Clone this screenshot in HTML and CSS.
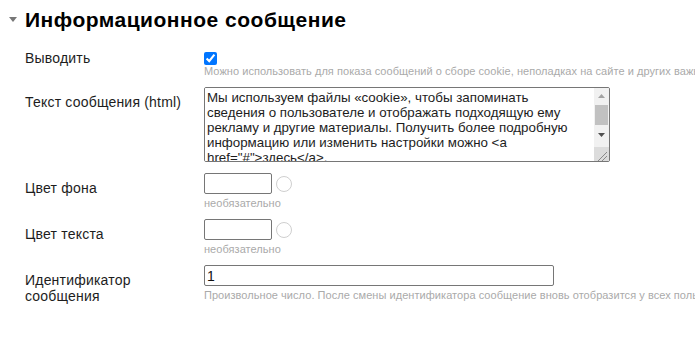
FILE: index.html
```html
<!DOCTYPE html>
<html lang="ru">
<head>
    <meta charset="UTF-8">
    <meta name="viewport" content="width=device-width, initial-scale=1.0">
    <title>Информационное сообщение</title>
    <link rel="stylesheet" href="styles.css">
</head>
<body>
    <section class="group">
        <h2 class="group-title"><span class="caret"></span>Информационное сообщение</h2>

        <div class="fields">
            <div class="field field-check">
                <label class="field-label" for="showMessage">Выводить</label>
                <div class="field-control">
                    <input type="checkbox" id="showMessage" class="check" checked>
                    <div class="hint hint-tight">Можно использовать для показа сообщений о сборе cookie, неполадках на сайте и других важных событиях</div>
                </div>
            </div>

            <div class="field field-text">
                <label class="field-label" for="messageText">Текст сообщения (html)</label>
                <div class="field-control">
                    <div class="message-box">
                        <textarea id="messageText" class="message-text">Мы используем файлы «cookie», чтобы запоминать сведения о пользователе и отображать подходящую ему рекламу и другие материалы. Получить более подробную информацию или изменить настройки можно &lt;a href="#"&gt;здесь&lt;/a&gt;.</textarea>
                        <div class="scrollbar">
                            <div class="scroll-btn">
                                <svg width="7" height="4" viewBox="0 0 7 4"><polygon points="0,4 3.5,0 7,4" fill="#a3a3a3"/></svg>
                            </div>
                            <div class="scroll-track"><div class="scroll-thumb"></div></div>
                            <div class="scroll-btn scroll-btn-down">
                                <svg width="7" height="4" viewBox="0 0 7 4"><polygon points="0,0 7,0 3.5,4" fill="#505050"/></svg>
                            </div>
                            <div class="scroll-corner">
                                <svg width="15" height="14" viewBox="0 0 15 14"><path d="M13 5 L4 14 M13 9 L8 14" stroke="#8a8a8a" stroke-width="1"/></svg>
                            </div>
                        </div>
                    </div>
                </div>
            </div>

            <div class="field">
                <label class="field-label" for="bgColor">Цвет фона</label>
                <div class="field-control">
                    <div class="color-row">
                        <input type="text" id="bgColor" class="input color-input">
                        <span class="color-swatch"></span>
                    </div>
                    <div class="hint">необязательно</div>
                </div>
            </div>

            <div class="field">
                <label class="field-label" for="textColor">Цвет текста</label>
                <div class="field-control">
                    <div class="color-row">
                        <input type="text" id="textColor" class="input color-input">
                        <span class="color-swatch"></span>
                    </div>
                    <div class="hint">необязательно</div>
                </div>
            </div>

            <div class="field">
                <label class="field-label" for="messageId">Идентификатор сообщения</label>
                <div class="field-control">
                    <input type="text" id="messageId" class="input id-input" value="1">
                    <div class="hint">Произвольное число. После смены идентификатора сообщение вновь отобразится у всех пользователей</div>
                </div>
            </div>
        </div>
    </section>
</body>
</html>
```

FILE: styles.css
```css
body {
    font-family: "Liberation Sans", Arial, sans-serif;
    background-color: #fff;
    color: #1d1d1d;
    margin: 0;
    padding: 0;
    overflow: hidden;
}
.group-title {
    display: flex;
    align-items: center;
    margin: 8px 0 18px;
    padding-left: 9px;
    font-size: 21px;
    line-height: 24px;
    letter-spacing: 0.5px;
    font-weight: bold;
    color: #000;
}
.caret {
    width: 0;
    height: 0;
    border-left: 4px solid transparent;
    border-right: 4px solid transparent;
    border-top: 5px solid #777;
    margin-right: 8px;
    margin-bottom: 2px;
}
.fields {
    padding-left: 25px;
}
.field {
    display: grid;
    grid-template-columns: 179px minmax(0, 1fr);
    margin-bottom: 9px;
}
.field-label {
    font-size: 14px;
    line-height: 16px;
    letter-spacing: 0.2px;
    padding-top: 7px;
    padding-right: 14px;
}
.field-check .field-label {
    padding-top: 0;
}
.field-control {
    min-width: 0;
}
.check {
    display: block;
    width: 13px;
    height: 13px;
    margin: 2px 0 0;
}
.hint {
    font-size: 11px;
    line-height: 13px;
    letter-spacing: 0.05px;
    color: #aaa;
    margin-top: 3px;
    white-space: nowrap;
    overflow: hidden;
}
.hint-tight {
    margin-top: 0;
}
.field-text {
    margin-bottom: 11px;
}
.message-box {
    display: flex;
    width: 406px;
    height: 75px;
    box-sizing: border-box;
    border: 1px solid #767676;
    border-radius: 2px;
    overflow: hidden;
}
.message-text {
    flex: 1;
    min-width: 0;
    border: 0;
    padding: 2px 6px 2px 2px;
    margin: 0;
    resize: none;
    overflow: hidden;
    font-family: "Liberation Sans", Arial, sans-serif;
    font-size: 13.3333px;
    color: #1d1d1d;
    outline: none;
}
.scrollbar {
    width: 15px;
    display: flex;
    flex-direction: column;
    background-color: #f1f1f1;
}
.scroll-btn {
    height: 15px;
    display: flex;
    justify-content: center;
    align-items: center;
}
.scroll-btn svg {
    display: block;
}
.scroll-btn-down {
    height: 18px;
    align-items: flex-start;
    padding-top: 4px;
    box-sizing: border-box;
}
.scroll-track {
    height: 26px;
    padding: 2px 1px 0;
    box-sizing: border-box;
}
.scroll-thumb {
    height: 20px;
    background-color: #c1c1c1;
}
.scroll-corner {
    flex: 1;
    background-color: #dcdcdc;
    display: flex;
    align-items: flex-end;
}
.scroll-corner svg {
    display: block;
}
.input {
    display: block;
    box-sizing: border-box;
    height: 21px;
    margin: 0;
    padding: 0 2px;
    border: 1px solid #767676;
    border-radius: 2px;
    font-family: "Liberation Sans", Arial, sans-serif;
    font-size: 14px;
    color: #111;
    background-color: #fff;
}
.color-row {
    display: flex;
    align-items: center;
}
.color-input {
    width: 68px;
}
.color-swatch {
    width: 16px;
    height: 16px;
    box-sizing: border-box;
    border: 1px solid #cfcfcf;
    border-radius: 50%;
    margin-left: 4px;
}
.id-input {
    width: 350px;
}
```
